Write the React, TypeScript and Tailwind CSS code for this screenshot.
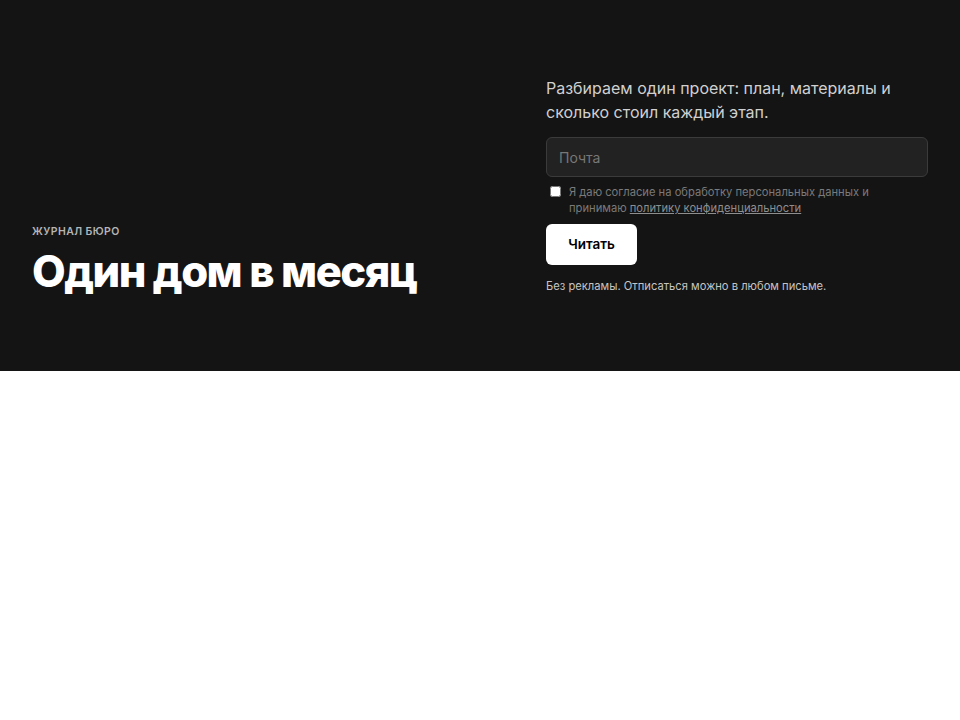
import React, { useState } from 'react';

export default function App() {
  const [email, setEmail] = useState('');
  const [agree, setAgree] = useState(false);

  return (
    <div className="min-h-screen bg-white" style={{ fontFamily: 'Inter, "Noto Sans", sans-serif' }}>
      <section className="bg-[#141414] h-[371px] px-8 flex items-end justify-between pb-[77px]">
        {/* Left: title */}
        <div>
          <p className="text-[10.5px] font-semibold tracking-[0.04em] text-[#b5b5b5] uppercase leading-4">
            Журнал бюро
          </p>
          <h1 className="mt-[10px] text-[43.6px] leading-[44px] font-extrabold tracking-[-0.035em] text-white">
            Один дом в месяц
          </h1>
        </div>

        {/* Right: subscribe form */}
        <form className="w-[382px]" onSubmit={(e) => e.preventDefault()}>
          <p className="text-[16px] leading-[24px] text-[#d0d0d0]">
            Разбираем один проект: план, материалы и сколько стоил каждый этап.
          </p>
          <input
            type="email"
            value={email}
            onChange={(e) => setEmail(e.target.value)}
            placeholder="Почта"
            className="mt-[13px] w-full h-[40px] rounded-md bg-[#222222] border border-[#3b3b3b] px-3 text-[14px] text-white placeholder:text-[#777777] focus:outline-none"
          />
          <label className="mt-[7px] flex items-start gap-[8px] pl-[4px] text-[11.2px] leading-4 text-[#7a7a7a]">
            <input
              type="checkbox"
              checked={agree}
              onChange={(e) => setAgree(e.target.checked)}
              className="mt-[2px] w-[11px] h-[11px] shrink-0"
            />
            <span>
              Я даю согласие на обработку персональных данных и принимаю{' '}
              <a href="#" className="underline text-[#8e8e8e]">политику конфиденциальности</a>
            </span>
          </label>
          <button
            type="submit"
            className="mt-[8px] h-[41px] w-[91px] rounded-md bg-white text-black text-[13.5px] font-semibold"
          >
            Читать
          </button>
          <p className="mt-[13px] text-[11.2px] leading-4 text-[#c4c4c4]">
            Без рекламы. Отписаться можно в любом письме.
          </p>
        </form>
      </section>
    </div>
  );
}
